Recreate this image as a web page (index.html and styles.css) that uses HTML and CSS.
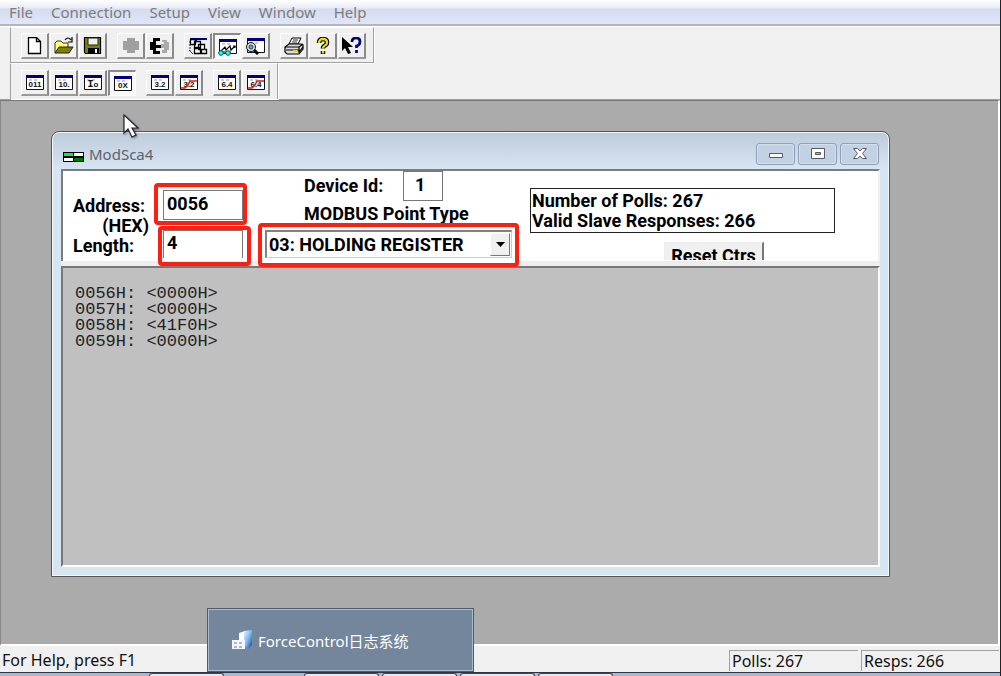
FILE: index.html
```html
<!DOCTYPE html>
<html lang="en">
<head>
<meta charset="utf-8">
<title>ModSca4</title>
<link rel="stylesheet" href="styles.css">
</head>
<body>
<svg class="defs" aria-hidden="true">
  <symbol id="panel" viewBox="0 0 20 18">
    <path d="M1.5 1.5h17v14h-17z" fill="#fff" stroke="#111"/>
    <path d="M1 1h18v3H1z" fill="#000080"/>
    <path d="M4 6h3M9 6h3" stroke="#999"/>
  </symbol>
  <symbol id="slash" viewBox="0 0 20 18">
    <path d="M2 14h4l3-3 2-4h7" fill="none" stroke="#e11" stroke-width="1.5"/>
  </symbol>
</svg>
<div class="app">
  <nav class="menubar">
    <button>File</button><button>Connection</button><button>Setup</button><button>View</button><button>Window</button><button>Help</button>
  </nav>
  <div class="toolbars">
    <div class="band">
      <div class="group">
        <button class="tool" aria-label="New"><svg viewBox="0 0 20 18"><path d="M3.5.5h8l4 4v12h-12z" fill="#fff" stroke="#000" stroke-width="1.3"/><path d="M11.5.5v4h4" fill="none" stroke="#000" stroke-width="1.3"/></svg></button>
        <button class="tool" aria-label="Open"><svg viewBox="0 0 20 18"><path d="M1 16V6l2-2h4l2 2h5v4" fill="#ffff70" stroke="#333"/><path d="M1 16l4-6h14l-4 6z" fill="#808000" stroke="#222"/><path d="M11 3q3-4 6 0M18 0v5h-4" fill="none" stroke="#000" stroke-width="1.2"/></svg></button>
        <button class="tool" aria-label="Save"><svg viewBox="0 0 20 18"><path d="M1.5.5h16v16h-15l-1-1z" fill="#808000" stroke="#000" stroke-width="1.2"/><path d="M5 1h10v7H5z" fill="#eee" stroke="#222"/><path d="M5 11h11v6H5z" fill="#000"/><path d="M12 12h2v4h-2z" fill="#fff"/></svg></button>
      </div>
      <div class="group">
        <button class="tool" aria-label="Connect"><svg viewBox="0 0 20 18"><path d="M6 1h8v3h4v9h-4v3H6v-3H2V4h4z" fill="#a0a0a0"/></svg></button>
        <button class="tool" aria-label="Disconnect"><svg viewBox="0 0 20 18"><path d="M3 1h7v3H6v4h5v3H6v3h4v3H3v-4H0V5h3z" fill="#000"/><path d="M12 3h5v2h2v8h-2v3h-5v-3h2v-2h-3V7h3V5h-2z" fill="#aaa"/></svg></button>
      </div>
      <div class="group">
        <button class="tool" aria-label="Data definition"><svg viewBox="0 0 20 18"><path d="M2 1h17v2H9v2H2z" fill="#000080"/><path d="M2 4v10l3 3m-4-4l4 4" fill="none" stroke="#228" stroke-dasharray="2 1"/><path d="M2.500 2.500h5v5h-5zM6.500 4.500h6v6h-6zM10.500 7.500h6v5h-6zM6.500 11.500h6v5h-6zM13.500 12.500h5v4h-5z" fill="#fff" stroke="#000" stroke-width="1.300"/></svg></button>
        <button class="tool pressed" aria-label="Display"><svg viewBox="0 0 20 18"><use href="#panel"/><path d="M2 14l5-5 1 3 4-4 1 4 4-4M15 8h2v2" fill="none" stroke="#000" stroke-width="1.200"/><path d="M1 14h12" stroke="#000"/><circle cx="3" cy="15" r="2.300" fill="#2ff" stroke="#055"/><circle cx="10" cy="15" r="2.300" fill="#2ff" stroke="#055"/></svg></button>
        <button class="tool" aria-label="Inspect"><svg viewBox="0 0 20 18"><use href="#panel"/><path d="M7 12l5 5" stroke="#000" stroke-width="3"/><circle cx="5" cy="10" r="4.500" fill="#ddd" stroke="#111"/><circle cx="5" cy="10" r="2" fill="#6aa" stroke="#055"/></svg></button>
      </div>
      <div class="group">
        <button class="tool" aria-label="Print"><svg viewBox="0 0 20 18"><path d="M5 7l3-6h9l-3 6z" fill="#fff" stroke="#000"/><path d="M9 3h5M8 5h5" stroke="#333"/><path d="M1 10l4-3h12l2 1v4l-4 5H3l-2-2z" fill="#ddd" stroke="#000" stroke-width="1.200"/><path d="M1 10h14v6M2 13h13M15 10l4-3M15 15l4-5" fill="none" stroke="#000" stroke-width="1.200"/><path d="M9 14h4" stroke="#dd0" stroke-width="2"/></svg></button>
        <button class="tool" aria-label="About"><svg viewBox="0 0 20 18"><path d="M6 6q0-4 4-4t4 3.500q0 2-2 3t-2 3M10 14v3" fill="none" stroke="#000" stroke-width="4.500"/><path d="M6 6q0-4 4-4t4 3.500q0 2-2 3t-2 3M10 14v2.500" fill="none" stroke="#e8e000" stroke-width="2.300"/></svg></button>
        <button class="tool" aria-label="Context help"><svg viewBox="0 0 20 18"><path d="M0 0v14l3-3 3 6 3-1-3-6h5z" fill="#000"/><path d="M10 5q0-4 4-4t4 3.500-3.500 4.500v2M14.500 13v3" fill="none" stroke="#000080" stroke-width="2.700"/></svg></button>
      </div>
    </div>
    <div class="band short">
      <div class="group">
        <button class="tool" aria-label="Binary"><svg viewBox="0 0 20 18"><use href="#panel"/><text x="10" y="13">011</text></svg></button>
        <button class="tool" aria-label="Decimal"><svg viewBox="0 0 20 18"><use href="#panel"/><text x="10" y="13">10.</text></svg></button>
        <button class="tool" aria-label="Integer"><svg viewBox="0 0 20 18"><use href="#panel"/><text x="10" y="13"><tspan class="big">I</tspan>o</text></svg></button>
        <button class="tool pressed" aria-label="Hex"><svg viewBox="0 0 20 18"><use href="#panel"/><text x="10" y="13">0X</text></svg></button>
      </div>
      <div class="group">
        <button class="tool" aria-label="Float 32"><svg viewBox="0 0 20 18"><use href="#panel"/><text x="10" y="13">3.2</text></svg></button>
        <button class="tool" aria-label="Swapped float 32"><svg viewBox="0 0 20 18"><use href="#panel"/><text x="10" y="13">3.2</text><use href="#slash"/></svg></button>
      </div>
      <div class="group">
        <button class="tool" aria-label="Float 64"><svg viewBox="0 0 20 18"><use href="#panel"/><text x="10" y="13">6.4</text></svg></button>
        <button class="tool" aria-label="Swapped float 64"><svg viewBox="0 0 20 18"><use href="#panel"/><text x="10" y="13">6.4</text><use href="#slash"/></svg></button>
      </div>
    </div>
  </div>

  <main class="desktop">
    <section class="window">
      <header class="titlebar">
        <svg class="logo" viewBox="0 0 21 10"><path d="M0 0h21v10H0z" fill="#000"/><path d="M1 1h9v3H1z" fill="#1e3"/><path d="M11 1h9v3h-9zM1 6h9v3H1z" fill="#fff"/><path d="M11 6h9v3h-9z" fill="#070"/></svg>
        <h1>ModSca4</h1>
        <button class="caption" aria-label="Minimize"><svg viewBox="0 0 16 14"><path d="M1.500 6.500h13v4h-13z" fill="#fff" stroke="#565870"/></svg></button>
        <button class="caption" aria-label="Maximize"><svg viewBox="0 0 16 14"><path d="M1.500 1.500h13v10h-13z" fill="#fff" stroke="#565870"/><path d="M5.500 5.500h5v2h-5z" fill="#aac" stroke="#565870"/></svg></button>
        <button class="caption" aria-label="Close"><svg viewBox="0 0 16 14"><path d="M1.500 1.500h4L8 4l2.500-2.500h4L10.500 6.500l4 5h-4L8 9l-2.500 2.500h-4l4-5z" fill="#fff" stroke="#565870"/></svg></button>
      </header>
      <form class="form">
        <div class="labels">
          <label for="address">Address:</label>
          <span class="hex">(HEX)</span>
          <label for="length">Length:</label>
        </div>
        <div class="fields">
          <div class="mark"><input id="address" class="field" value="0056"></div>
          <div class="mark low"><input id="length" class="field open" value="4"></div>
        </div>
        <div class="point">
          <div class="device"><label for="device">Device Id:</label><input id="device" value="1"></div>
          <label class="type" for="type">MODBUS Point Type</label>
          <div class="mark wide">
            <div class="combo">
              <select id="type"><option>03: HOLDING REGISTER</option></select>
              <span class="drop"><svg viewBox="0 0 9 5"><path d="M0 0h9L4.500 5z"/></svg></span>
            </div>
          </div>
        </div>
        <div class="stats">
          <div class="counts">
            <div>Number of Polls: 267</div>
            <div>Valid Slave Responses: 266</div>
          </div>
          <div class="clip"><button type="button" class="reset">Reset Ctrs</button></div>
        </div>
      </form>
      <pre class="data">0056H: &lt;0000H&gt;
0057H: &lt;0000H&gt;
0058H: &lt;41F0H&gt;
0059H: &lt;0000H&gt;</pre>
    </section>
  </main>

  <footer class="status">
    <span class="hint">For Help, press F1</span>
    <span class="cell">Polls: 267</span>
    <span class="cell">Resps: 266</span>
  </footer>
  <div class="taskbar"><i></i><i></i><i></i><i></i><i></i></div>

  <div class="popup">
    <svg viewBox="0 0 20 20"><defs><linearGradient id="blue" x1="0" x2="1" y1="0" y2="1"><stop offset="0" stop-color="#eaf6ff"/><stop offset=".5" stop-color="#7ab8ee"/><stop offset="1" stop-color="#0a3f9c"/></linearGradient></defs><path d="M7 3l6-2v10H7z" fill="#fff"/><path d="M12 1l8-1v15l-4 4-4-4z" fill="url(#blue)"/><path d="M0 10h13v9H0z" fill="#f4f6ff"/><path d="M2 12h3v2H2zM7 12h3v2H7zM2 16h3v2H2zM7 16h3v2H7z" fill="#a9b4e4"/></svg>
    <span>ForceControl日志系统</span>
  </div>
  <svg class="cursor" viewBox="0 0 16 24"><path d="M1 1v18l4-4 4 8 4-2-4-7h6z" fill="#fff" stroke="#223" stroke-width="1.200"/></svg>
</div>
</body>
</html>
```

FILE: styles.css
```css
* { box-sizing: border-box; }
body {
  margin: 0;
  font-family: "Noto Sans", "Noto Sans CJK SC", sans-serif;
  font-size: 15px;
  color: #111;
}
button, input, select { font: inherit; color: inherit; margin: 0; padding: 0; border-radius: 0; }
.defs { display: none; }
.app {
  position: relative;
  display: flex;
  flex-direction: column;
  height: 100vh;
  background: #f0f0f0;
  border-right: 1px solid #222;
  overflow: hidden;
}
.menubar {
  display: flex;
  gap: 18px;
  padding-left: 9px;
  height: 26px;
  background: linear-gradient(#fff 0, #e8ecf8 8px, #d5dcee 9px, #dfe5f7 22px);
  border-bottom: 2px solid #b4b6bc;
  flex: none;
}
.menubar button { height: 24px; border: 0; background: none; color: #7c7c7c; line-height: 22px; }

.toolbars { flex: none; padding-left: 10px; border-top: 1px solid #fff; border-bottom: 1px solid #a0a0a0; }
.band {
  display: flex;
  gap: 10px;
  width: max-content;
  height: 36px;
  padding: 5px 7px 0 10px;
  border: 1px solid #a0a0a0;
  border-top-color: #fff;
  box-shadow: 1px 1px 0 #fff;
}
.band.short { border-bottom: 0; padding: 6px 7px 0 10px; }
.group { display: flex; gap: 1px; }
.tool {
  display: grid;
  place-items: center;
  width: 28px;
  height: 26px;
  background: #f0f0f0;
  border: 1px solid #fff;
  border-right: 2px solid #8a8a8a;
  border-bottom: 2px solid #9a9a9a;
}
.tool.pressed { background: #f8f8f8; border: 2px solid #8a8a8a; border-right: 1px solid #fff; border-bottom: 1px solid #fff; }
.tool svg { width: 20px; height: 18px; }
.tool text { font: bold 8px "Liberation Sans", sans-serif; text-anchor: middle; fill: #111; }
.tool .big { font: bold 10px "Liberation Mono", monospace; }

.desktop {
  position: relative;
  flex: 1;
  background: #ababab;
  border: 1px solid #777;
  border-left-color: #888;
  border-right: 2px solid #fff;
  border-bottom: 2px solid #fff;
}
.window {
  position: absolute;
  left: 50px;
  right: 108px;
  top: 30px;
  bottom: 67px;
  display: flex;
  flex-direction: column;
  padding: 0 9px 9px;
  border: 1px solid #555;
  border-radius: 8px 8px 0 0;
  background: linear-gradient(#bccbda, #d7e4f2 36px);
  box-shadow: inset 0 0 0 1px #f4f8fc;
}
.titlebar { display: flex; align-items: center; gap: 3px; height: 37px; padding: 6px 1px 0 2px; flex: none; }
.titlebar h1 { flex: 1; margin: 0 0 0 2px; font-size: 15px; font-weight: 400; line-height: 20px; color: #5c6268; }
.logo { width: 21px; height: 10px; margin-top: 6px; }
.caption {
  display: grid;
  place-items: center;
  width: 39px;
  height: 22px;
  border: 1px solid #929fbb;
  border-radius: 3px;
  background: #c3d2e3;
  box-shadow: inset 0 0 0 1px #d3dfec;
}
.caption svg { width: 16px; height: 14px; }

.form {
  position: relative;
  z-index: 1;
  display: flex;
  height: 92px;
  flex: none;
  padding-left: 10px;
  background: #fff;
  border-top: 2px solid #7c7c7c;
  border-left: 2px solid #7c7c7c;
  border-right: 2px solid #f0f0f0;
  font: bold 18px/20px Roboto, sans-serif;
  color: #000;
}
.labels { display: flex; flex-direction: column; width: 81px; padding-top: 25px; flex: none; }
.hex { padding-right: 5px; text-align: right; }
.fields { width: 104px; padding-top: 12px; flex: none; }
.mark { border: 4px solid #fb2012; border-radius: 4px; width: 93px; height: 42px; padding: 3px 0 0 5px; }
.mark.low { height: 40px; margin: 1px 0 0 4px; padding: 0 0 0 1px; }
.field { display: block; width: 80px; height: 30px; padding: 0 0 4px 3px; border: 1px solid #777; background: #fff; }
.field.open { height: 28px; border-bottom: 0; }
.point { width: 272px; flex: none; display: flex; flex-direction: column; }
.device { display: flex; align-items: center; gap: 20px; height: 32px; padding-left: 46px; }
.device input { width: 40px; height: 30px; text-align: center; border: 1px solid #777; padding: 0 6px 4px 0; background: #fff; }
.type { padding: 3px 0 0 46px; height: 22px; }
.mark.wide { width: 261px; height: 44px; padding: 3px; flex: none; background: #fff; }
.combo { position: relative; height: 28px; border: 2px solid #808080; border-right: 1px solid #ccc; border-bottom: 1px solid #ccc; }
.combo select { width: 100%; height: 100%; padding-left: 2px; border: 0; background: #fff; appearance: none; display: block; }
.drop {
  position: absolute;
  inset: 1px 1px 1px auto;
  width: 20px;
  display: grid;
  place-items: center;
  pointer-events: none;
  background: #f0f0f0;
  border: 1px solid #fff;
  border-right-color: #777;
  border-bottom-color: #777;
}
.drop svg { width: 9px; height: 5px; }
.stats { display: flex; flex-direction: column; flex: 0 1 305px; padding-top: 17px; }
.counts { height: 45px; padding: 2px 1px; border: 1px solid #222; white-space: nowrap; }
.clip { height: 18px; margin: 9px 71px 0 auto; overflow: hidden; }
.reset { width: 100px; height: 28px; background: #f0f0f0; border: 1px solid #eee; border-right: 2px solid #777; border-bottom: 2px solid #777; white-space: nowrap; line-height: 22px; }
.data {
  flex: 1;
  margin: 5px 0 0;
  padding: 18px 12px;
  background: #c0c0c0;
  background-clip: padding-box;
  border-top: 2px solid #777;
  border-left: 2px solid #777;
  border-right: 2px solid #f8f8f8;
  border-bottom: 2px solid #fff;
  box-shadow: 0 -5px 0 #eee;
  font: 17px/16px "Liberation Mono", monospace;
  color: #222;
}

.status { display: flex; gap: 3px; height: 26px; padding: 4px 1px 1px 2px; flex: none; font-size: 16px; line-height: 21px; }
.hint { flex: 1; }
.cell { width: 129px; padding-left: 2px; border-top: 1px solid #a0a0a0; border-left: 1px solid #a0a0a0; line-height: 20px; }
.cell:last-child { width: 138px; }
.taskbar { display: flex; gap: 3px; height: 4px; flex: none; padding-left: 149px; background: #a3bad6; border-top: 1px solid #334; }
.taskbar i { width: 75px; background: #e3eaf2; border: 1px solid #445; border-bottom: 0; border-radius: 3px 3px 0 0; }
.taskbar i:nth-child(2) { margin-left: 77px; }
.popup {
  position: absolute;
  left: 207px;
  bottom: 4px;
  width: 267px;
  height: 64px;
  display: flex;
  align-items: center;
  gap: 6px;
  padding: 0 0 0 24px;
  background: #74869b;
  border: 1px solid #505a68;
  box-shadow: inset 0 0 0 1px #a7bace;
  color: #fff;
}
.popup svg { width: 20px; height: 20px; }
.cursor { position: absolute; left: 123px; top: 114px; width: 16px; height: 24px; filter: drop-shadow(1px 1px 1px #0006); }
```
